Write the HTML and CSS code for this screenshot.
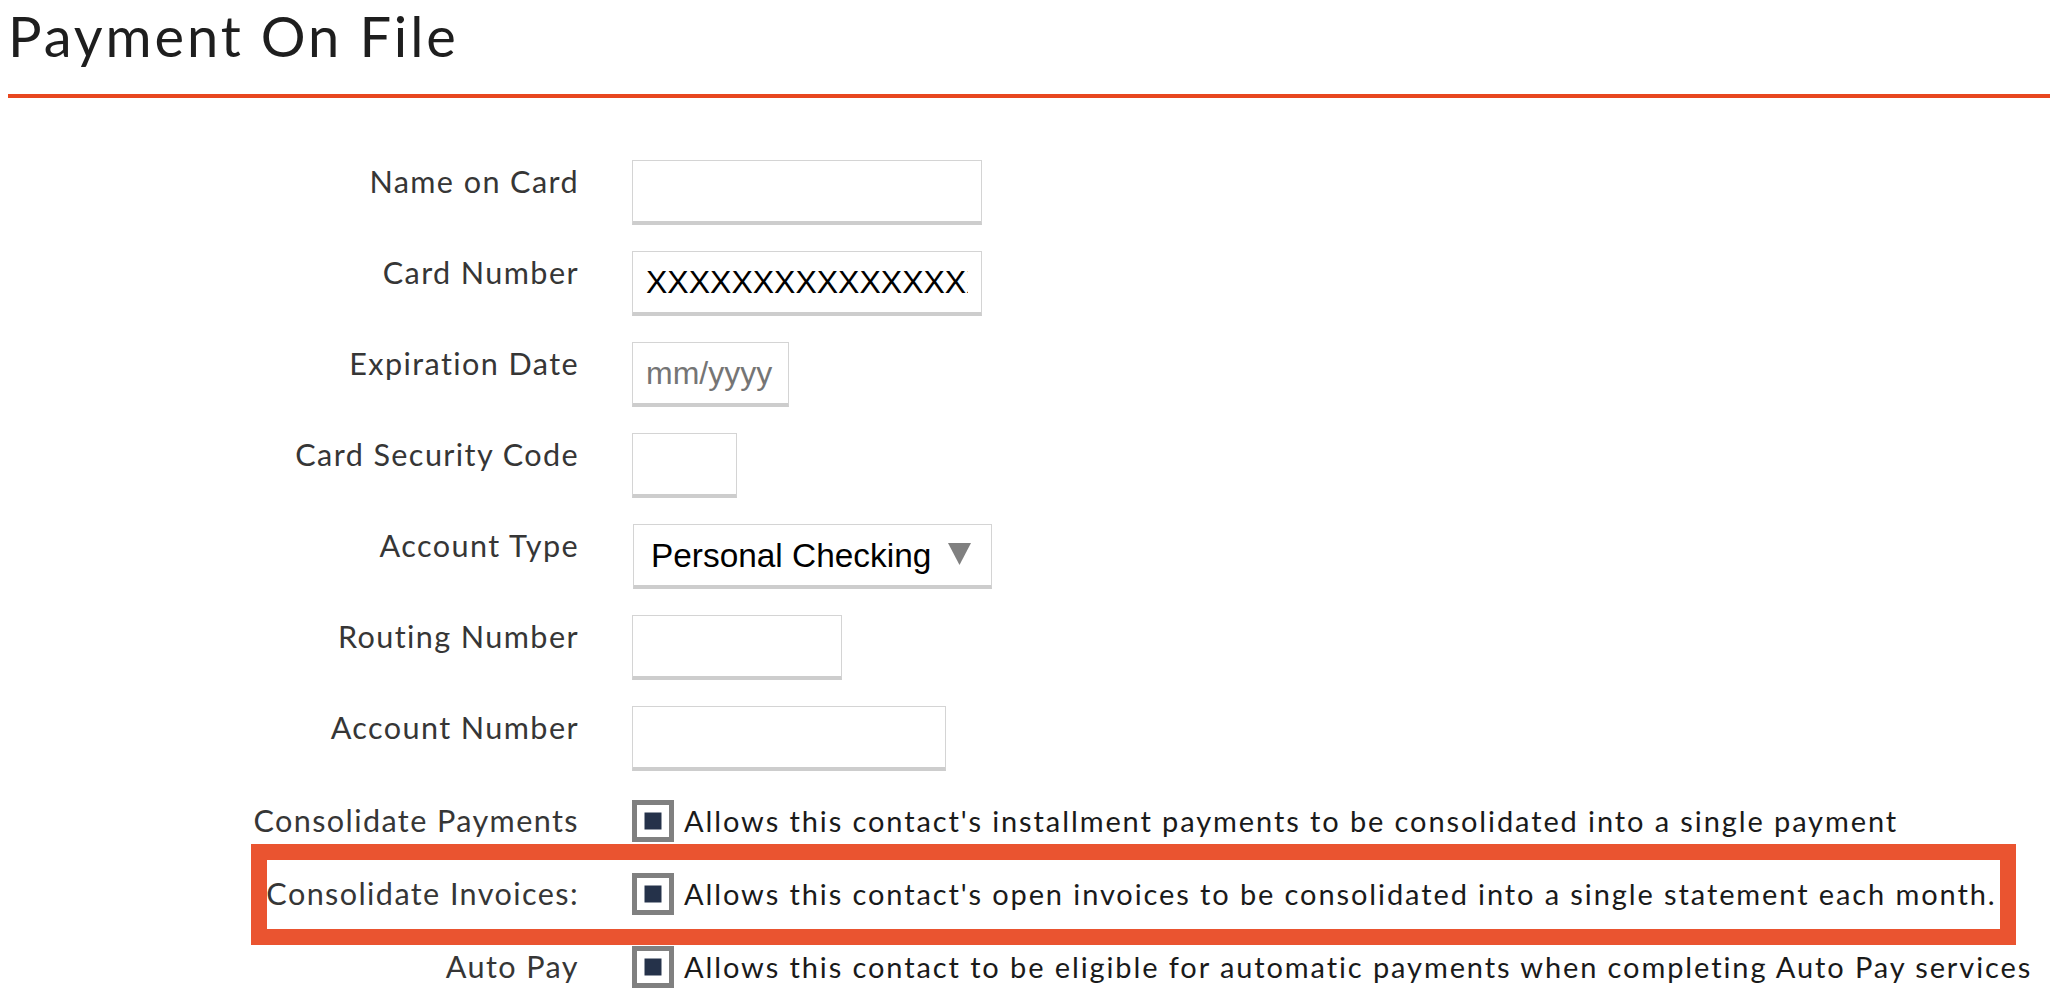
FILE: index.html
```html
<!DOCTYPE html>
<html lang="en">
<head>
<meta charset="utf-8">
<title>Payment On File</title>
<link rel="stylesheet" href="styles.css">
</head>
<body>
<div class="page">
  <h1 class="title">Payment On File</h1>
  <div class="rule"></div>
  <form class="form">
    <div class="row">
      <label class="label" for="name">Name on Card</label>
      <input class="field w-name" id="name" type="text">
    </div>
    <div class="row">
      <label class="label" for="card">Card Number</label>
      <input class="field w-name" id="card" type="text" value="XXXXXXXXXXXXXXXX">
    </div>
    <div class="row">
      <label class="label" for="exp">Expiration Date</label>
      <input class="field w-exp" id="exp" type="text" placeholder="mm/yyyy">
    </div>
    <div class="row">
      <label class="label" for="csc">Card Security Code</label>
      <input class="field w-csc" id="csc" type="text">
    </div>
    <div class="row">
      <label class="label" for="acct-type">Account Type</label>
      <div class="select-wrap">
        <select class="select" id="acct-type">
          <option>Personal Checking</option>
        </select>
        <svg class="select-arrow" width="23" height="22" viewBox="0 0 23 22"><polygon points="0,0 23,0 11.5,22" fill="#808080"/></svg>
      </div>
    </div>
    <div class="row">
      <label class="label" for="routing">Routing Number</label>
      <input class="field w-routing" id="routing" type="text">
    </div>
    <div class="row">
      <label class="label" for="acct">Account Number</label>
      <input class="field w-acct" id="acct" type="text">
    </div>
    <div class="row row-check">
      <label class="label" for="c1">Consolidate Payments</label>
      <div class="check">
        <input class="checkbox" id="c1" type="checkbox" checked>
        <span class="desc">Allows this contact's installment payments to be consolidated into a single payment</span>
      </div>
    </div>
    <div class="row row-check is-highlighted">
      <label class="label" for="c2">Consolidate Invoices:</label>
      <div class="check">
        <input class="checkbox" id="c2" type="checkbox" checked>
        <span class="desc">Allows this contact's open invoices to be consolidated into a single statement each month.</span>
      </div>
      <div class="highlight"></div>
    </div>
    <div class="row row-check">
      <label class="label" for="c3">Auto Pay</label>
      <div class="check">
        <input class="checkbox" id="c3" type="checkbox" checked>
        <span class="desc">Allows this contact to be eligible for automatic payments when completing Auto Pay services</span>
      </div>
    </div>
  </form>
</div>
</body>
</html>
```
FILE: styles.css
```css
html, body {
  margin: 0;
  padding: 0;
  background: #ffffff;
}

body {
  font-family: "Lato", "Liberation Sans", sans-serif;
  color: #222222;
}

.page {
  padding-left: 8px;
}

.title {
  margin: 0;
  padding-top: 7px;
  font-size: 56px;
  line-height: 57px;
  font-weight: 400;
  letter-spacing: 2.9px;
  color: #1e1e1e;
}

.rule {
  margin-top: 30px;
  height: 4px;
  background: #e8471f;
}

.form {
  margin-top: 62px;
  display: flex;
  flex-direction: column;
  gap: 26px;
}

.row {
  display: flex;
  align-items: flex-start;
  gap: 53px;
}

.label {
  flex: 0 0 571px;
  width: 571px;
  text-align: right;
  font-size: 30.6px;
  line-height: 40px;
  padding-top: 2px;
  letter-spacing: 1.4px;
  color: #363636;
  white-space: nowrap;
}

.field {
  box-sizing: border-box;
  height: 65px;
  margin: 0;
  padding: 0 13px;
  border: 1px solid #d4d4d4;
  border-bottom: 4px solid #cdcdcd;
  border-radius: 0;
  background: #ffffff;
  font-family: "Liberation Sans", Arial, sans-serif;
  font-size: 32px;
  color: #000000;
  outline: none;
}

.field::placeholder {
  color: #757575;
}

.w-name { width: 350px; }
.w-exp { width: 157px; }
.w-csc { width: 105px; }
.w-routing { width: 210px; }
.w-acct { width: 314px; }

.select-wrap {
  position: relative;
  margin-left: 1px;
}

.select {
  box-sizing: border-box;
  width: 359px;
  height: 65px;
  margin: 0;
  padding: 0 40px 0 17px;
  border: 1px solid #d4d4d4;
  border-bottom: 4px solid #cdcdcd;
  border-radius: 0;
  background: #ffffff;
  font-family: "Liberation Sans", Arial, sans-serif;
  font-size: 33.4px;
  color: #000000;
  -webkit-appearance: none;
  appearance: none;
  outline: none;
}

.select-arrow {
  position: absolute;
  left: 315px;
  top: 19px;
  pointer-events: none;
}

.row-check {
  align-items: center;
  min-height: 47px;
}

.row-check .label {
  padding-top: 0;
}

.check {
  display: flex;
  align-items: center;
  gap: 10px;
}

.checkbox {
  -webkit-appearance: none;
  appearance: none;
  box-sizing: border-box;
  flex: 0 0 42px;
  width: 42px;
  height: 42px;
  margin: 0;
  border: 5px solid #808080;
  border-radius: 0;
  background: #25324a;
  box-shadow: inset 0 0 0 7.5px #ffffff;
}

.desc {
  font-size: 29px;
  line-height: 40px;
  letter-spacing: 1.9px;
  color: #1a1a1a;
  white-space: nowrap;
}

.is-highlighted {
  position: relative;
}

.highlight {
  position: absolute;
  top: -26px;
  bottom: -28px;
  left: 243px;
  right: 34px;
  border: 16px solid #ea5430;
  pointer-events: none;
}
```
